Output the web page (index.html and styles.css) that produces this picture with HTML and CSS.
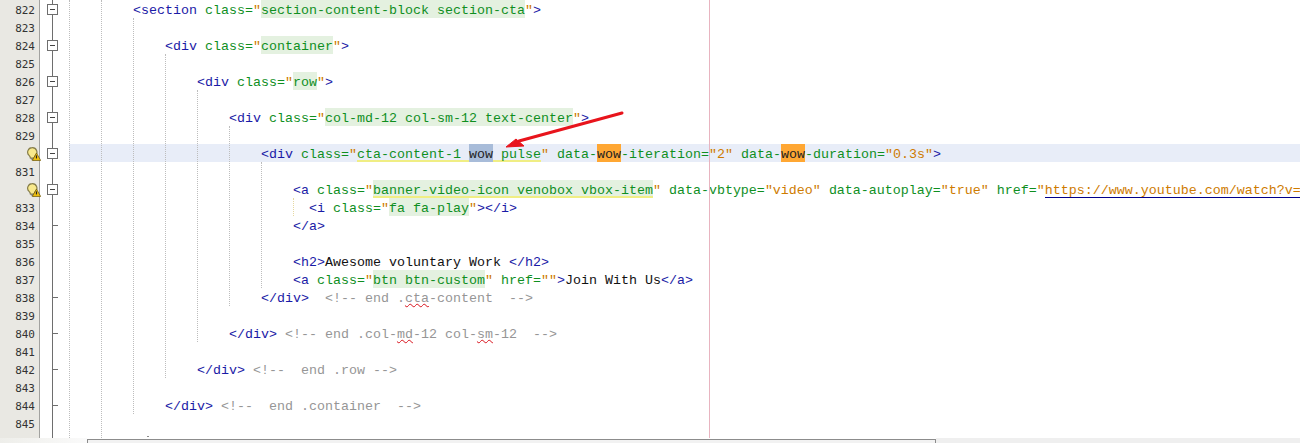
FILE: index.html
```html
<!DOCTYPE html>
<html lang="en">
<head>
<meta charset="utf-8">
<title>Editor</title>
<link rel="stylesheet" href="styles.css">
</head>
<body>
<div class="editor">
  <div class="gutter">
    <div class="num">822</div><div class="num">823</div><div class="num">824</div><div class="num">825</div>
    <div class="num">826</div><div class="num">827</div><div class="num">828</div><div class="num">829</div>
    <div class="num"><svg class="bulb" viewBox="0 0 13 13"><path d="M4.800.6a4.200 4.200 0 0 0-2.700 7.400c.7.700 1 1.300 1 2.200h3.600c.1-.9.300-1.500 1-2.200A4.200 4.200 0 0 0 4.800.6z" fill="#f8e98c" stroke="#857c48" stroke-width="1.100"/><path d="M3.400 10.800l3 1.500v-1.500z" fill="#8c8c80" stroke="#77776c" stroke-width=".7"/><path d="M8.800 5.600l3.900 6.900H4.900z" fill="#f0c010" stroke="#6f5a0c" stroke-width=".7"/><path d="M8.800 7.800v2.800" stroke="#222" stroke-width="1.100"/></svg></div>
    <div class="num">831</div>
    <div class="num"><svg class="bulb" viewBox="0 0 13 13"><path d="M4.800.6a4.200 4.200 0 0 0-2.700 7.400c.7.700 1 1.300 1 2.200h3.600c.1-.9.300-1.500 1-2.200A4.200 4.200 0 0 0 4.800.6z" fill="#f8e98c" stroke="#857c48" stroke-width="1.100"/><path d="M3.400 10.800l3 1.500v-1.500z" fill="#8c8c80" stroke="#77776c" stroke-width=".7"/><path d="M8.800 5.600l3.900 6.900H4.900z" fill="#f0c010" stroke="#6f5a0c" stroke-width=".7"/><path d="M8.800 7.800v2.800" stroke="#222" stroke-width="1.100"/></svg></div>
    <div class="num">833</div><div class="num">834</div><div class="num">835</div><div class="num">836</div>
    <div class="num">837</div><div class="num">838</div><div class="num">839</div><div class="num">840</div>
    <div class="num">841</div><div class="num">842</div><div class="num">843</div><div class="num">844</div><div class="num">845</div>
  </div>
  <div class="fold">
    <div class="mark"><span class="box"></span></div><div class="mark"></div>
    <div class="mark"><span class="box"></span></div><div class="mark"></div>
    <div class="mark"><span class="box"></span></div><div class="mark"></div>
    <div class="mark"><span class="box"></span></div><div class="mark"></div>
    <div class="mark"><span class="box"></span></div><div class="mark"></div>
    <div class="mark"><span class="box"></span></div><div class="mark"></div>
    <div class="mark"><span class="tick"></span></div><div class="mark"></div><div class="mark"></div><div class="mark"></div>
    <div class="mark"><span class="tick"></span></div><div class="mark"></div>
    <div class="mark"><span class="tick"></span></div><div class="mark"></div>
    <div class="mark"><span class="tick"></span></div><div class="mark"></div>
    <div class="mark"><span class="tick"></span></div><div class="mark"></div>
  </div>
  <div class="code">
<div class="line">        <span class="t">&lt;section</span> <span class="a">class=</span><span class="q">"</span><span class="hl">section-content-block section-cta</span><span class="q">"</span><span class="t">&gt;</span></div>
<div class="line"></div>
<div class="line">            <span class="t">&lt;div</span> <span class="a">class=</span><span class="q">"</span><span class="hl">container</span><span class="q">"</span><span class="t">&gt;</span></div>
<div class="line"></div>
<div class="line">                <span class="t">&lt;div</span> <span class="a">class=</span><span class="q">"</span><span class="hl">row</span><span class="q">"</span><span class="t">&gt;</span></div>
<div class="line"></div>
<div class="line">                    <span class="t">&lt;div</span> <span class="a">class=</span><span class="q">"</span><span class="hl">col-md-12 col-sm-12 text-center</span><span class="q">"</span><span class="t">&gt;</span></div>
<div class="line"></div>
<div class="line current">                        <span class="t">&lt;div</span> <span class="a">class=</span><span class="q">"</span><span class="a warn">cta-content-1 <span class="sel">wow</span> pulse</span><span class="q">"</span> <span class="a">data-<span class="occ">wow</span>-iteration=</span><span class="q">"2"</span> <span class="a">data-<span class="occ">wow</span>-duration=</span><span class="q">"0.3s"</span><span class="t">&gt;</span></div>
<div class="line"></div>
<div class="line">                            <span class="t">&lt;a</span> <span class="a">class=</span><span class="q">"</span><span class="hl warn">banner-video-icon venobox vbox-item</span><span class="q">"</span> <span class="a">data-vbtype=</span><span class="q">"video"</span> <span class="a">data-autoplay=</span><span class="q">"true"</span> <span class="a">href=</span><span class="q">"<span class="link">https://www.youtube.com/watch?v=</span></span></div>
<div class="line">                              <span class="t">&lt;i</span> <span class="a">class=</span><span class="q">"</span><span class="hl">fa fa-play</span><span class="q">"</span><span class="t">&gt;&lt;/i&gt;</span></div>
<div class="line">                            <span class="t">&lt;/a&gt;</span></div>
<div class="line"></div>
<div class="line">                            <span class="t">&lt;h2&gt;</span><span class="k">Awesome voluntary Work </span><span class="t">&lt;/h2&gt;</span></div>
<div class="line">                            <span class="t">&lt;a</span> <span class="a">class=</span><span class="q">"</span><span class="hl">btn btn-custom</span><span class="q">"</span> <span class="a">href=</span><span class="q">""</span><span class="t">&gt;</span><span class="k">Join With Us</span><span class="t">&lt;/a&gt;</span></div>
<div class="line">                        <span class="t">&lt;/div&gt;</span>  <span class="c">&lt;!-- end .<span class="typo">cta</span>-content  --&gt;</span></div>
<div class="line"></div>
<div class="line">                    <span class="t">&lt;/div&gt;</span> <span class="c">&lt;!-- end .col-<span class="typo">md</span>-12 col-<span class="typo">sm</span>-12  --&gt;</span></div>
<div class="line"></div>
<div class="line">                <span class="t">&lt;/div&gt;</span> <span class="c">&lt;!--  end .row --&gt;</span></div>
<div class="line"></div>
<div class="line">            <span class="t">&lt;/div&gt;</span> <span class="c">&lt;!--  end .container  --&gt;</span></div>
<div class="line"></div>
    <span class="guide g0"></span><span class="guide g1"></span><span class="guide g2"></span><span class="guide g3"></span>
    <span class="guide g4"></span><span class="guide g5"></span><span class="guide g6"></span><span class="guide g7"></span>
    <span class="margin"></span>
    <span class="speck"></span>
    <svg class="arrow" viewBox="0 0 135 44"><path d="M131 3 28 31" stroke="#e8141c" stroke-width="3" stroke-linecap="round" fill="none"/><path d="M15 37 25 29 33 36z" fill="#e8141c" stroke="#e8141c" stroke-width="1"/></svg>
  </div>
</div>
<div class="status">
  <div class="status-left"></div>
  <div class="status-panel"></div>
  <div class="status-right"></div>
</div>
</body>
</html>
```
FILE: styles.css
```css
* { box-sizing: border-box; }
html, body { margin: 0; padding: 0; background: #fff; overflow: hidden; }
body { width: 1300px; height: 443px; display: flex; flex-direction: column; }

.editor { display: flex; height: 438px; flex: none; overflow: hidden; }

.gutter { position: relative; z-index: 1; width: 40px; flex: none; background: #e9e8e3; border-right: 1px solid #a2a2a0; }
.num {
  position: relative;
  height: 18px;
  padding: 2px 4px 0 0;
  text-align: right;
  font: 11px/18px "DejaVu Sans Mono", monospace;
  color: #333;
}
.bulb { position: absolute; left: 27px; top: 3px; width: 14px; height: 14px; }

.fold { position: relative; width: 29px; flex: none; background: #fff; }
.fold::before { content: ""; position: absolute; left: 12px; top: 0; bottom: 0; width: 1px; background: #6e6e6e; }
.mark { position: relative; height: 18px; display: flex; align-items: center; padding-left: 7px; }
.box { position: relative; width: 11px; height: 11px; background: #fff; border: 1px solid #6e6e6e; }
.box::after { content: ""; position: absolute; left: 2px; right: 2px; top: 4px; height: 1px; background: #444; }
.tick { width: 6px; height: 1px; margin-left: 5px; background: #6e6e6e; }

.code {
  position: relative;
  flex: 1;
  min-width: 0;
  overflow: hidden;
  font: 13.33px/22px "Liberation Mono", monospace;
  color: #000;
}
.line { height: 18px; white-space: pre; }
.current { background: #e8edf8; }

.t { color: #1a1aa6; }
.a { color: #0f8f1f; }
.q { color: #ce7b00; }
.c { color: #969696; }
.k { color: #111; }
.hl { display: inline-block; height: 18px; color: #0f8f1f; background: #e4f1e0; vertical-align: top; }
.warn { display: inline-block; height: 18px; vertical-align: top; box-shadow: inset 0 -2px 0 #f0ee84; }
.sel { display: inline-block; height: 18px; vertical-align: top; color: #222; background: #a8bcd9; }
.occ { display: inline-block; height: 18px; vertical-align: top; color: #222; background: #ffa733; }
.link { display: inline-block; height: 18px; vertical-align: top; box-shadow: inset 0 -1px 0 #00008c; }
.typo { text-decoration: underline wavy #d8121c 1px; text-underline-offset: 1px; }

.guide { position: absolute; width: 0; border-left: 1px dotted #bdbdbd; }
.g0 { left: 0; top: 0; bottom: 0; }
.g1 { left: 32px; top: 0; bottom: 0; }
.g2 { left: 64px; top: 18px; height: 396px; }
.g3 { left: 96px; top: 54px; height: 324px; }
.g4 { left: 128px; top: 90px; height: 252px; }
.g5 { left: 160px; top: 126px; height: 180px; }
.g6 { left: 192px; top: 162px; height: 126px; }
.g7 { left: 224px; top: 198px; height: 18px; border-left-color: #e6d8a0; }

.margin { position: absolute; left: 640px; top: 0; bottom: 0; width: 1px; background: #e8b4c0; }
.speck { position: absolute; left: 78px; top: 436px; width: 2px; height: 1px; background: #8c8c8c; }
.arrow { position: absolute; left: 422px; top: 110px; width: 135px; height: 44px; }

.status { display: flex; height: 5px; flex: none; }
.status-left { width: 87px; flex: none; background: linear-gradient(90deg, #eeeeea, #fafafa); }
.status-panel { width: 849px; flex: none; margin-top: 1px; background: #f2f2f2; border: 1px solid #8c8c8c; border-bottom: 0; }
.status-right { flex: 1; background: #efefef; }
```
